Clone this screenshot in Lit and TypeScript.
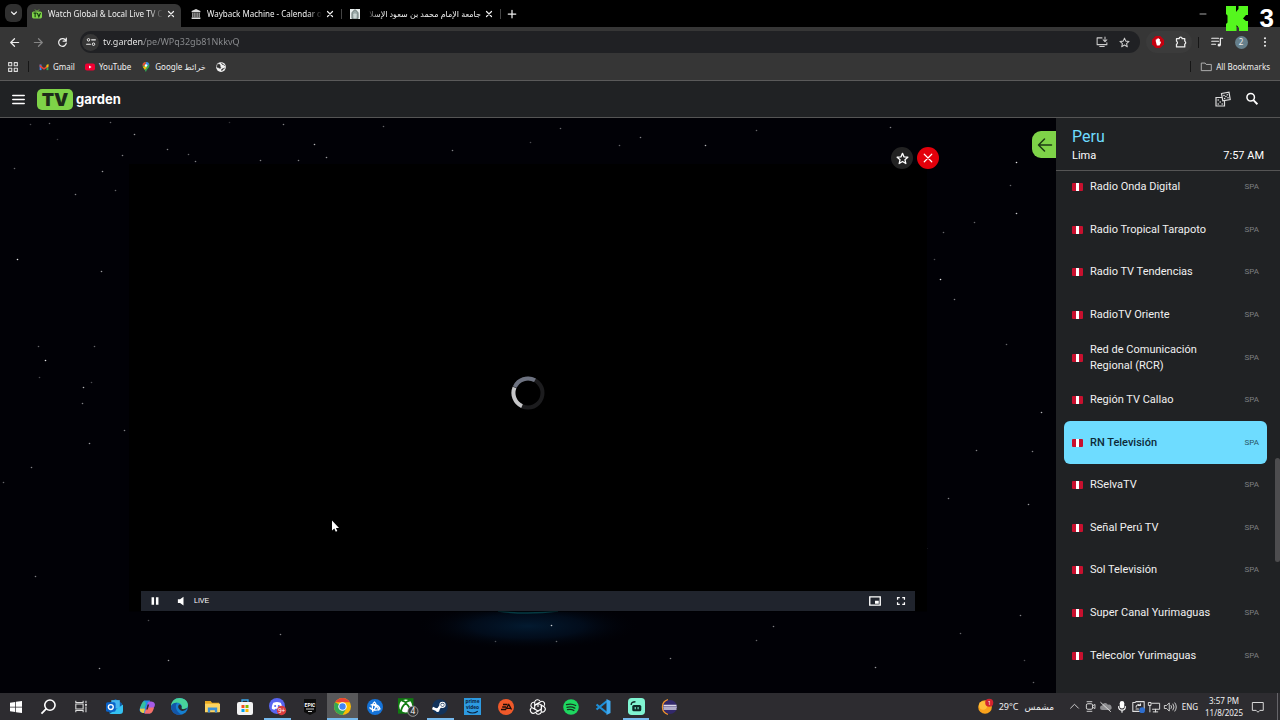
import { LitElement, html, svg, css } from "lit";
import { customElement } from "lit/decorators.js";
import { classMap } from "lit/directives/class-map.js";

const icon = (w: number, body: unknown, h = w, box = "0 0 16 16") =>
  html`<svg width=${w} height=${h} viewBox=${box} fill="none" aria-hidden="true">${body}</svg>`;

const line = (d: string, color = "#eee", width = 1.6) =>
  svg`<path d=${d} stroke=${color} stroke-width=${width} stroke-linecap="round" stroke-linejoin="round"/>`;

const STAR = "M8 1.6 9.9 6l4.7.4-3.6 3.1 1.1 4.7L8 11.7l-4.1 2.5L5 9.5 1.4 6.4 6.1 6z";
const close = icon(8, line("M3 3l10 10M13 3L3 13", "#eee", 2.4));

const tvFav = svg`<path d="M5 1l3 3 3-3" stroke="#7ed348" stroke-width="1.6"/><rect x="0" y="4" width="16" height="11" rx="2.5" fill="#7ed348"/><path d="M2.5 6.5h5M5 6.5V13M8.5 6.5l2.5 6 2.500-6" stroke="#173d10" stroke-width="1.8"/>`;
const archiveFav = svg`<path d="M8 0l7 3v2H1V3z" fill="#ddd"/><path d="M3 6v7M6.300 6v7M9.700 6v7M13 6v7" stroke="#ddd" stroke-width="1.700"/><path d="M1 13.500h14V16H1z" fill="#ddd"/>`;
const domeFav = svg`<path d="M0 0h16v16H0z" fill="#e8eeee"/><path d="M3 15V7c0-3 3-4 5-6 2 2 5 3 5 6v8z" fill="#9aa9a8" stroke="#44504f"/><path d="M5.500 15V8.500c0-2 5-2 5 0V15z" fill="#c9d4d3"/>`;

const tabs = [
  { title: "Watch Global & Local Live TV C", fav: tvFav, active: true, rtl: false },
  { title: "Wayback Machine - Calendar of", fav: archiveFav, active: false, rtl: false },
  { title: "جامعة الإمام محمد بن سعود الإسلا", fav: domeFav, active: false, rtl: true },
];

const gmail = svg`<path d="M1 13V4h3v9z" fill="#4285f4"/><path d="M12 13V4h3v9z" fill="#34a853"/><path d="M1 4l7 5.500L15 4v3.500l-7 5-7-5z" fill="#ea4335"/><path d="M12 5l3-2v4l-3 2z" fill="#fbbc04"/>`;
const youtube = svg`<rect x="0" y="2.500" width="16" height="11" rx="3" fill="#f00033"/><path d="M6.500 5.500v5l4-2.500z" fill="#fff"/>`;
const maps = svg`<path d="M8 0a5.500 5.500 0 0 0-5.500 5.500C2.500 9.500 7 11 8 16z" fill="#34a853"/><path d="M8 0a5.500 5.500 0 0 1 5.500 5.500C13.500 9.500 9 11 8 16L5 10z" fill="#34a853"/><path d="M3 8l5-2 1 3-3 3.500z" fill="#fbbc04"/><path d="M8 0a5.500 5.500 0 0 0-5.300 7l4-3z" fill="#ea4335"/><path d="M8 0a5.500 5.500 0 0 1 5 3L8 8z" fill="#4285f4"/><circle cx="8" cy="5.500" r="2" fill="#fff"/>`;
const globe = svg`<circle cx="8" cy="8" r="7.800" fill="#f1f1f1"/><path d="M3 3.500c3 0 4 1 3.500 2.500S8 8 7.500 9.500 4 9 1.500 8c0-2 .5-3.500 1.500-4.500zM9 1.500c0 2 1 2.500 2.500 2.500S13 6 14.500 6M9.500 14c-1.500-1-.5-2.500.5-3s3-.5 4-1.500" fill="#333" stroke="#333"/>`;

const channels = [
  "Radio Onda Digital",
  "Radio Tropical Tarapoto",
  "Radio TV Tendencias",
  "RadioTV Oriente",
  "Red de Comunicación Regional (RCR)",
  "Región TV Callao",
  "RN Televisión",
  "RSelvaTV",
  "Señal Perú TV",
  "Sol Televisión",
  "Super Canal Yurimaguas",
  "Telecolor Yurimaguas",
];

// x, y, opacity
const stars: number[][] = [
  [49, 5, 0.4], [110, 4, 0.4], [57, 21, 0.25], [134, 16, 0.6], [167, 31, 0.5], [122, 37, 0.5], [188, 36, 0.4], [195, 43, 0.5],
  [229, 4, 0.2], [283, 6, 0.5], [314, 26, 0.7], [326, 39, 0.6], [260, 42, 0.5], [298, 42, 0.5], [14, 50, 0.4], [102, 53, 0.6],
  [75, 76, 0.5], [115, 72, 0.4], [17, 141, 0.9], [101, 153, 0.6], [38, 228, 0.4], [45, 242, 0.9], [39, 259, 0.3], [94, 228, 0.4],
  [83, 269, 0.7], [91, 264, 0.3], [82, 285, 0.5], [30, 6, 0.3], [124, 312, 0.5], [89, 325, 0.6], [31, 349, 0.5], [3, 364, 0.4],
  [35, 458, 0.5], [148, 502, 0.3], [280, 516, 0.5], [99, 550, 0.6], [168, 542, 0.6], [551, 507, 0.8], [495, 523, 0.3], [556, 523, 0.4],
  [773, 508, 0.5], [756, 522, 0.4], [875, 549, 0.6], [960, 515, 0.4], [1020, 497, 0.5], [1024, 542, 0.3], [1033, 564, 0.4], [670, 540, 0.5],
  [890, 9, 0.5], [705, 27, 0.7], [1016, 44, 0.9], [1010, 67, 0.4], [1016, 95, 0.8], [974, 104, 0.4], [943, 114, 0.4], [934, 141, 0.3],
  [940, 161, 0.9], [954, 181, 0.5], [1041, 294, 0.7], [1032, 333, 0.5], [976, 332, 0.5], [948, 380, 0.5], [1028, 386, 0.6], [1006, 226, 0.4],
  [640, 19, 0.5], [560, 10, 0.4], [452, 32, 0.5], [756, 12, 0.4], [619, 27, 0.4], [530, 24, 0.3], [926, 430, 0.4], [383, 8, 0.4],
];

type App = { name: string; art: unknown; running?: boolean; active?: boolean; size?: number };
const apps: App[] = [
  { name: "Start", size: 12, art: svg`<path d="M0 2.300l7-1v6.200H0zM8 1.100L16 0v7.500H8zM0 8.500h7v6.200l-7-1zM8 8.500h8V16l-8-1.100z" fill="#fff"/>` },
  { name: "Search", art: svg`<circle cx="9.500" cy="6.500" r="5.500" stroke="#fff" stroke-width="1.700"/><path d="M5.700 10.300L.5 15.500" stroke="#fff" stroke-width="1.900"/>` },
  { name: "Task View", size: 13, art: svg`<path d="M1 1v2h9V1M1 15v-2h9v2M1 5h9v6H1zM13.500 1v3M13.500 8v7" stroke="#ddd" stroke-width="1.300"/><path d="M12.500 5h2v2h-2z" fill="#fff"/>` },
  { name: "Outlook", size: 17, art: svg`<path d="M3 5l6-4 6 4v9H3z" fill="#0f5ea8"/><path d="M5 2h8v8H5z" fill="#45b5ef"/><path d="M3 15h10a3 3 0 0 0 3-3V6l-7 5z" fill="#35c1f1"/><rect y="4" width="9" height="9" rx="1.500" fill="#0a63c9"/><circle cx="4.500" cy="8.500" r="2.300" stroke="#fff" stroke-width="1.300"/>` },
  { name: "Copilot", size: 16, art: svg`<path d="M5 1.500h6L8 12c-.5 1.500-1 2-2.500 2-3 0-6-1-4.500-5z" fill="#1f8fe8"/><path d="M1 9h4.500L7 4 5 2C3 3 2 6 1 9z" fill="#35c0a0"/><path d="M1 9.500h5L5 14c-2.500 0-4.500-1.500-4-4.500z" fill="#e9d045"/><path d="M11 14.500H5.500L8.500 4.500C9 3 9.500 2.500 11 2.500c3 0 6 1 4.500 5z" fill="#a65be6"/><path d="M11 14.500H5.500L8 8.500h7c-1 3.500-2 6-4 6z" fill="#f5706a"/><path d="M8.500 5.500L7.200 10.500h1.500L10.200 5.500z" fill="#2d2c30"/>` },
  { name: "Edge", size: 17, art: svg`<circle cx="8" cy="8" r="8" fill="#1680d0"/><path d="M0 8C0 3 4 0 8 0c5 0 8 3.500 8 6.500 0 3-2.500 4-4.500 4-1.500 0-2-.7-1.500-1.500C11 7 8.500 4.500 6 4.500 3 4.500.5 6 0 8z" fill="#48d39b"/><path d="M0 8c.5-2.500 3-3.800 6-3.500C4 6 4 10 6.500 13c1 1.500 3 2.500 4 2.500C5 17.500 0 13.500 0 8z" fill="#1456a8"/><path d="M10 9c-.5.800 0 1.500 1.500 1.500 1 0 2-.2 3.500-1-1 3-6 4-8 0-.6-1.500 0-3 1-3.500 1 0 2.500 1.500 2 3z" fill="#2b2b2d"/>` },
  { name: "File Explorer", art: svg`<path d="M0 2h6l1.500 2H15v10H0z" fill="#e8a820"/><path d="M0 5h16v9H0z" fill="#fcd462"/><path d="M3 9h10v5.500h-2.500V12h-5v2.500H3z" fill="#3c91d8"/>` },
  { name: "Microsoft Store", size: 16, art: svg`<path d="M5 4V1h6v3" stroke="#3aa7ea" stroke-width="1.300"/><rect y="3" width="16" height="13" rx="2" fill="#f3f3f3"/><path d="M4.500 6h3v3h-3z" fill="#f25022"/><path d="M8.500 6h3v3h-3z" fill="#7fba00"/><path d="M4.500 10h3v3h-3z" fill="#00a4ef"/><path d="M8.500 10h3v3h-3z" fill="#ffb900"/>` },
  { name: "Discord", size: 17, running: true, art: svg`<circle cx="7.500" cy="7.500" r="7.500" fill="#5865f2"/><path d="M4 4.500c2.500-1 4.500-1 7 0 1 2 1.500 3.500 1.300 5.500-1 .8-2 1-2.500 1L9 10H6l-.8 1c-.5 0-1.500-.2-2.500-1C2.500 8 3 6.500 4 4.500z" fill="#fff"/><circle cx="5.800" cy="7.500" r="1" fill="#5865f2"/><circle cx="9.200" cy="7.500" r="1" fill="#5865f2"/><circle cx="11.800" cy="11.800" r="4.400" fill="#d83c3e"/><text x="11.800" y="14" font-size="6" font-family="Noto Sans, sans-serif" fill="#fff" text-anchor="middle">9+</text>` },
  { name: "Epic Games", size: 16, art: svg`<path d="M2 0h12v13l-6 3-6-3z" fill="#0c0c0c"/><text x="8" y="7.500" font-size="5" font-weight="700" font-family="Roboto, sans-serif" fill="#fff" text-anchor="middle">EPIC</text><path d="M4 10h8M6 12.500h4" stroke="#ccc"/>` },
  { name: "Google Chrome", size: 17, running: true, active: true, art: svg`<circle cx="8" cy="8" r="8" fill="#fbbc04"/><path d="M1.100 4A8 8 0 0 0 8 16l3.500-6L8 8z" fill="#34a853"/><path d="M1.100 4a8 8 0 0 1 13.800 0H8z" fill="#ea4335"/><circle cx="8" cy="8" r="4" fill="#fff"/><circle cx="8" cy="8" r="3" fill="#4285f4"/>` },
  { name: "Battle.net", size: 16, art: svg`<circle cx="8" cy="8" r="8" fill="#1573d8"/><path d="M2.500 8.500c2 2.500 7 3.500 10.500 1.500-1-3-3.500-4.500-6.500-4.500M6 13c-1.500-4-.5-9 1.500-10 2 1.500 1.500 5-1 8.500M3.500 6c3-1 7.500 1.500 8.500 5.500" stroke="#fff" stroke-width="1.300"/>` },
  { name: "Xbox", size: 19, art: svg`<path d="M0 1h13v13H0z" fill="#107c10"/><circle cx="6.500" cy="7.500" r="5.500" fill="#fff"/><path d="M2.500 12C3 9 5 6.500 6.500 5.500 8 6.500 10 9 10.500 12M3 3c1.500 0 2.500.7 3.500 1.500C7.500 3.700 8.500 3 10 3" stroke="#107c10" stroke-width="1.500"/><circle cx="12.500" cy="12" r="4.300" fill="#333" stroke="#bbb" stroke-width=".6"/><text x="12.500" y="14.600" font-size="7" font-family="Noto Sans, sans-serif" fill="#fff" text-anchor="middle">4</text>` },
  { name: "Steam", size: 16, running: true, art: svg`<circle cx="8" cy="8" r="7.800" fill="#12325a"/><path d="M.5 9l5 2.200L8.500 7" stroke="#fff" stroke-width="2.500"/><circle cx="10.500" cy="5.800" r="2.600" stroke="#fff" stroke-width="1.100"/><circle cx="10.500" cy="5.800" r="1.400" fill="#fff"/><circle cx="5.600" cy="11" r="1.900" fill="#fff"/>` },
  { name: "Prime Video", size: 17, art: svg`<path d="M0 0h16v16H0z" fill="#2d9ae0"/><text font-size="4.500" font-weight="700" font-family="Noto Sans, sans-serif" fill="#0b2440" text-anchor="middle"><tspan x="8" y="5">prime</tspan><tspan x="8" y="10.500">video</tspan></text><path d="M3 12.500c3 2 7 2 10 0" stroke="#0b2440"/>` },
  { name: "EA", size: 16, art: svg`<circle cx="8" cy="8" r="8" fill="#f0592a"/><path d="M5 5.500h4.500M4.200 8H8M3 10.500h4.500L10.800 5.500l2.700 5M9 9.300h3.500" stroke="#1a0c08" stroke-width="1.300"/>` },
  { name: "ChatGPT", size: 16, art: svg`<g stroke="#fff" stroke-width="1.100"><path d="M8 8V4.200l3-1.700a2.800 2.800 0 0 1 3 4.500"/><path d="M5 6.300L8.300 4.400l3.200 1.900v4"/><path d="M8 4.200L4.700 6.200V2.800A3 3 0 0 1 10 2"/><path d="M4.700 6.200v3.900L1.800 8.500A3 3 0 0 1 4.500 3.400"/><path d="M4.700 10.100L8 12l-3 1.700A3 3 0 0 1 1.300 9"/><path d="M8 12l3.300-2v3.300A3 3 0 0 1 6 14"/><path d="M11.300 10V6.200l2.900 1.600a3 3 0 0 1-2.700 5.200"/></g>` },
  { name: "Spotify", size: 16, art: svg`<circle cx="8" cy="8" r="7.800" fill="#1ed760"/><path d="M3.500 5.700c3-1 6.500-.7 9.200.8M4 8.300c2.600-.8 5.500-.5 7.800.8M4.500 10.700c2.200-.6 4.500-.4 6.400.8" stroke="#17331f" stroke-width="1.300" stroke-linecap="round"/>` },
  { name: "Visual Studio Code", size: 16, art: svg`<path d="M1.500 5.500L12 14M1.500 10.500L12 2" stroke="#1d8fd8" stroke-width="2.200"/><path d="M11.500 0l4 2v12l-4 2z" fill="#3fa9f0"/>` },
  { name: "Streamlabs", size: 17, running: true, art: svg`<rect width="16" height="16" rx="3.500" fill="#80f5d2"/><rect x="4" y="6.500" width="8.500" height="6" rx="1.500" fill="#0d2b28"/><path d="M3 6.500C3 4.500 4.500 3.500 7 3.500" stroke="#0d2b28" stroke-width="1.300"/><path d="M6.800 8.500v2M9.500 8.500v2" stroke="#80f5d2"/>` },
  { name: "Eclipse", size: 16, art: svg`<path d="M7 .8a7.500 7.500 0 0 0 0 14.400" stroke="#f0932b" stroke-width="1.600"/><circle cx="9" cy="8" r="7" fill="#33296b"/><path d="M2.500 6.300h13M2.300 8.200h13.500M2.500 10h13" stroke="#dcd8ea" stroke-width="1.300"/>` },
];

@customElement("browser-chrome")
class BrowserChrome extends LitElement {
  static styles = css`
    :host { display: block; font: 8px/12px "Noto Sans", "DejaVu Sans", sans-serif; color: #f0f0f0; }
    button { all: unset; display: flex; align-items: center; justify-content: center; flex: none; }
    svg { display: block; flex: none; overflow: visible; }
    .strip { display: flex; height: 23px; padding: 4px 5px 0; background: #000; }
    .menu { width: 17px; height: 18px; border-radius: 6px; background: #303030; margin-right: 5px; }
    .tab { display: flex; align-items: center; width: 149px; padding: 0 0 4px 5px; margin-right: 5px; position: relative; }
    .tab.active { background: #363636; border-radius: 6px 6px 0 0; }
    .tab:not(.active)::after { content: ""; width: 1px; height: 10px; background: #444; position: absolute; right: -2px; top: 5px; }
    .title { flex: 1; margin: 0 2px 0 6px; overflow: hidden; white-space: nowrap; mask-image: linear-gradient(90deg, #000 88%, transparent); }
    .title.rtl { mask-image: linear-gradient(270deg, #000 88%, transparent); }
    .close { width: 12px; margin-right: 4px; }
    .add { width: 16px; padding-bottom: 4px; }
    .window { margin-left: auto; width: 144px; padding-bottom: 4px; }
    .bar { display: flex; align-items: center; height: 30px; background: #363636; padding: 0 3px 0 4px; }
    .nav { width: 20px; height: 20px; margin-right: 4px; }
    .omni { flex: 1; display: flex; align-items: center; height: 22px; border-radius: 11px; background: #202124; margin-left: 4px; padding: 0 7px 0 2px; gap: 4px; }
    .site { width: 17px; height: 17px; border-radius: 50%; background: #363636; }
    input { flex: 1; min-width: 0; border: 0; padding: 0; outline: 0; font: 9px/14px "Noto Sans", sans-serif; color: transparent;
      background: linear-gradient(90deg, #f2f2f2 41px, #8d8f92 41px) text; }
    .omni button:not(.site) { width: 18px; }
    .ext { display: flex; align-items: center; justify-content: space-around; width: 46px; height: 22px; border-radius: 11px; background: #3b3b3b; margin: 0 6px; }
    .rule { width: 1px; height: 11px; background: #161616; flex: none; }
    .tools { display: flex; align-items: center; margin-left: 6px; }
    .tools button { width: 24px; }
    .avatar span { width: 13px; height: 13px; border-radius: 50%; background: #66808c; text-align: center; }
    .marks { display: flex; align-items: center; height: 24px; padding: 0 10px 4px 8px; box-sizing: border-box; background: #363636; border-bottom: 1px solid #5a5a5a; }
    .marks a { display: flex; align-items: center; gap: 4px; color: inherit; text-decoration: none; margin-left: 10px; }
    .marks .rule { margin-left: 10px; }
    .marks .push { margin-left: auto; }
  `;

  render() {
    return html`
      <div class="strip">
        <button class="menu" aria-label="Search tabs">${icon(8, line("M3 6l5 5 5-5", "#eee", 2.2))}</button>
        ${tabs.map((t) => html`<div class=${classMap({ tab: true, active: t.active })}>
          ${icon(10, t.fav)}
          <span class=${classMap({ title: true, rtl: t.rtl })} dir=${t.rtl ? "rtl" : "ltr"}>${t.title}</span>
          <button class="close" aria-label="Close tab">${close}</button>
        </div>`)}
        <button class="add" aria-label="New tab">${icon(10, line("M8 2v12M2 8h12", "#eee", 2))}</button>
        <button class="window" aria-label="Minimize">${icon(8, line("M2 8h12", "#ddd", 1.500))}</button>
      </div>
      <div class="bar">
        <button class="nav" aria-label="Back">${icon(11, line("M14 8H3M8 2.500L2.500 8 8 13.500", "#eee", 1.800))}</button>
        <button class="nav" aria-label="Forward">${icon(11, line("M2 8h11M8 2.500L13.500 8 8 13.500", "#858585", 1.800))}</button>
        <button class="nav" aria-label="Reload">${icon(11, line("M13.500 9A5.600 5.600 0 1 1 12 4l1.500 1.500M13.500 1.500V6H9", "#eee", 1.800))}</button>
        <div class="omni">
          <button class="site" aria-label="Site information">${icon(10, svg`<circle cx="4" cy="4.500" r="2" stroke="#eee" stroke-width="1.600"/><circle cx="12" cy="11.500" r="2" stroke="#eee" stroke-width="1.600"/>${line("M9 4.500h6M1 11.500h6", "#eee", 1.800)}`)}</button>
          <input aria-label="Address" .value=${"tv.garden/pe/WPq32gb81NkkvQ"} />
          <button aria-label="Install app">${icon(12, line("M8 2.500H1.500v9h13V9M5 14h6M12 1.500v5.500M9.500 5l2.500 2.500L14.500 5", "#ccc", 1.400))}</button>
          <button aria-label="Bookmark">${icon(11, line(STAR, "#ccc", 1.500))}</button>
        </div>
        <div class="ext">
          <button aria-label="Ad blocker">${icon(12, svg`<path d="M5 0h6l5 5v6l-5 5H5l-5-5V5z" fill="#c4000f"/><path d="M5 7V4.500h1.300V3.500h1.400V3h1.400v1h1.400v4l1.300-1v2L10 12.500H6.500z" fill="#fff"/>`)}</button>
          <button aria-label="Extensions">${icon(12, line("M2 3.500h3.500a2 2 0 0 1 4 0H13v3.500a2 2 0 0 1 0 3.700V14.500H2v-3.500a2.200 2.200 0 0 0 0-4z", "#eee", 1.700))}</button>
        </div>
        <span class="rule"></span>
        <div class="tools">
          <button aria-label="Media">${icon(12, svg`${line("M1 3h9M1 7h9M1 11h5M12.500 12V3h3", "#eee", 1.600)}<circle cx="10.800" cy="12" r="2" fill="#eee"/>`)}</button>
          <button class="avatar" aria-label="Profile"><span>2</span></button>
          <button aria-label="Menu">${icon(12, svg`<circle cx="8" cy="3" r="1.400" fill="#eee"/><circle cx="8" cy="8" r="1.400" fill="#eee"/><circle cx="8" cy="13" r="1.400" fill="#eee"/>`)}</button>
        </div>
      </div>
      <nav class="marks">
        <button aria-label="Apps">${icon(10, line("M1 1h5v5H1zM10 1h5v5h-5zM1 10h5v5H1zM10 10h5v5h-5z", "#ddd", 1.700))}</button>
        <span class="rule"></span>
        <a href="#gmail">${icon(10, gmail)}Gmail</a>
        <a href="#youtube">${icon(10, youtube)}YouTube</a>
        <a href="#maps">${icon(10, maps)}<span dir="rtl">خرائط Google</span></a>
        <a href="#site" aria-label="Site">${icon(10, globe)}</a>
        <span class="rule push"></span>
        <a href="#all">${icon(11, line("M1 3h5l1.500 2H15v9H1z", "#bbb", 1.300))}All Bookmarks</a>
      </nav>`;
  }
}

@customElement("tv-garden")
class TvGarden extends LitElement {
  static styles = css`
    :host { display: flex; flex-direction: column; min-height: 0; font: 11px/16px Roboto, sans-serif; color: #f1f1f1; background: #202224; }
    button { all: unset; display: flex; align-items: center; justify-content: center; flex: none; box-sizing: border-box; }
    svg { display: block; flex: none; }
    header { display: flex; align-items: center; height: 36px; padding: 0 21px 0 12px; border-bottom: 1px solid #555; }
    .logo { display: flex; align-items: center; gap: 3px; margin: 0 auto 0 12px; color: #fff; text-decoration: none; font: 700 13px/16px Inter, sans-serif; }
    .logo b { display: block; width: 36px; text-align: center; border-radius: 5px; background: #7ed348; color: #1d2b1a; font-size: 18px; line-height: 21px; }
    header .dice { margin-right: 14px; }
    .body { flex: 1; display: flex; min-height: 0; }
    .stage { flex: 1; position: relative; overflow: hidden; background: #010106; padding: 58px 141px 0; box-sizing: border-box; min-width: 0; }
    .sky { position: absolute; inset: 0; width: 100%; height: 100%; }
    .player { position: relative; aspect-ratio: 16 / 9; background: #000; box-shadow: 0 0 0 12px #000; display: flex; flex-direction: column; clip-path: inset(-40px -40px 0); }
    .video { flex: 1; display: flex; align-items: center; justify-content: center; padding-top: 19px; }
    .controls { display: flex; align-items: center; height: 20px; padding: 0 6px 0 5px; background: #20242d; font: 7px/10px "Liberation Sans", sans-serif; color: #fff; }
    .controls button { width: 17px; margin-right: 9px; }
    .controls .fs { margin-right: 0; }
    .live { margin: 0 auto 0 -4px; }
    .actions { position: absolute; right: -24px; top: -29px; display: flex; gap: 4px; }
    .actions button { width: 22px; height: 22px; border-radius: 50%; background: #222; }
    .actions .shut { background: #e3000b; }
    .collapse { position: absolute; right: 0; top: 13px; width: 24px; height: 27px; border-radius: 9px 0 0 9px; background: #7ed348; padding-left: 2px; }
    aside { position: relative; display: flex; flex-direction: column; width: 224px; background: #202224; overflow: hidden; }
    .place { padding: 9px 16px 7px; height: 36px; border-bottom: 1px solid #555; z-index: 1; background: #202224; }
    h1 { margin: 0; font: 400 16px/20px Roboto, sans-serif; color: #6edcff; }
    .city { display: flex; justify-content: space-between; font-size: 11px; line-height: 17px; color: #fff; }
    ul { flex: 1; display: flex; flex-direction: column; list-style: none; margin: -5px 0 0; padding: 0 13px 16px 8px; }
    li { flex: 1; display: flex; }
    li a { flex: 1; display: flex; align-items: center; padding: 0 8px; border-radius: 6px; color: inherit; text-decoration: none; }
    li a.on { background: #6edcff; color: #0d2a38; font-weight: 500; }
    .name { flex: 1; padding: 0 24px 0 7px; }
    .lang { font-size: 8px; font-weight: 400; color: #7c7e80; }
    .on .lang { color: #2a5566; }
    .thumb { position: absolute; right: 0; top: 340px; width: 5px; height: 104px; border-radius: 3px; background: #4d4d4f; }
  `;

  render() {
    return html`
      <header>
        <button aria-label="Menu">${icon(13, line("M1 3h14M1 8h14M1 13h14", "#fff", 1.900))}</button>
        <a class="logo" href="#home"><b>TV</b>garden</a>
        <button class="dice" aria-label="Random channel">${icon(16, svg`<path d="M1 6.500h8.500V15H1z" stroke="#ddd" stroke-width="1.200"/><path d="M6.500 2.500l7.500-1.300 1.200 7.300-7.400 1.300z" fill="#202224" stroke="#ddd" stroke-width="1.200"/><g fill="#ddd"><circle cx="9" cy="4.500" r=".8"/><circle cx="12.300" cy="3.800" r=".8"/><circle cx="10.900" cy="5.500" r=".8"/><circle cx="9.600" cy="7.500" r=".8"/><circle cx="13" cy="6.800" r=".8"/><circle cx="3.200" cy="9" r=".8"/><circle cx="5.200" cy="11" r=".8"/><circle cx="3.200" cy="13" r=".8"/><circle cx="7.200" cy="13" r=".8"/></g>`)}</button>
        <button aria-label="Search">${icon(14, svg`<circle cx="6.500" cy="6" r="4.300" stroke="#fff" stroke-width="1.700"/><path d="M9.600 9.200L14.200 14" stroke="#fff" stroke-width="2.100"/>`)}</button>
      </header>
      <div class="body">
        <main class="stage">
          <svg class="sky" aria-hidden="true">
            <defs>
              <radialGradient id="glow"><stop offset="0" stop-color="#031a30"/><stop offset=".5" stop-color="#020f20" stop-opacity=".8"/><stop offset="1" stop-color="#010106" stop-opacity="0"/></radialGradient>
            </defs>
            <ellipse cx="528" cy="508" rx="112" ry="24" fill="url(#glow)"/>
            <path d="M498 493q29 4 60 0" stroke="#053a42" stroke-width="1.500" fill="none"/>
            ${stars.map(([x, y, o]) => svg`<circle cx=${x + 0.5} cy=${y + 0.5} r=".8" fill="#fff" opacity=${o}/>`)}
          </svg>
          <section class="player" aria-label="Player">
            <div class="video">
              ${icon(34, svg`<circle cx="17" cy="17" r="14.500" stroke="#1c1c1e" stroke-width="4"/><path d="M3.800 11A14.500 14.500 0 0 1 24 4.300" stroke="#6d7280" stroke-width="4"/><path d="M3.500 11.500A14.500 14.500 0 0 0 11 30.200" stroke="#c6c6c8" stroke-width="4"/>`, 34, "0 0 34 34")}
            </div>
            <div class="controls">
              <button aria-label="Pause">${icon(10, svg`<path d="M2.500 2h4v12h-4zM9.500 2h4v12h-4z" fill="#fff"/>`)}</button>
              <button aria-label="Mute">${icon(10, svg`<path d="M3 5h3.500L12 1v14L6.500 11H3z" fill="#fff"/>`)}</button>
              <span class="live">LIVE</span>
              <button aria-label="Picture in picture">${icon(12, svg`<path d="M1 2.500h14v11H1z" stroke="#fff" stroke-width="1.800"/><path d="M8 7.500h5v4H8z" fill="#fff"/>`)}</button>
              <button class="fs" aria-label="Fullscreen">${icon(10, svg`<path d="M2.500 6V2.500H6M10 2.500h3.500V6M13.500 10v3.500H10M6 13.500H2.500V10" stroke="#fff" stroke-width="2"/>`)}</button>
            </div>
            <div class="actions">
              <button aria-label="Favorite">${icon(13, line(STAR, "#fff", 1.600))}</button>
              <button class="shut" aria-label="Close player">${icon(12, line("M3 3l10 10M13 3L3 13", "#fff", 1.600))}</button>
            </div>
          </section>
          <button class="collapse" aria-label="Collapse list">${icon(16, line("M14.500 8H2M7.500 2L1.500 8l6 6", "#1d3a14", 1.500))}</button>
        </main>
        <aside>
          <div class="place">
            <h1>Peru</h1>
            <div class="city"><span>Lima</span><time>7:57 AM</time></div>
          </div>
          <ul>
            ${channels.map((c) => html`<li><a href="#channel" class=${classMap({ on: c === "RN Televisión" })}>
              ${icon(11, svg`<rect width="11" height="8" rx="1" fill="#c8102e"/><path d="M4 0h3v8H4z" fill="#fff"/>`, 8, "0 0 11 8")}
              <span class="name">${c}</span><span class="lang">SPA</span>
            </a></li>`)}
          </ul>
          <div class="thumb"></div>
        </aside>
      </div>`;
  }
}

@customElement("task-bar")
class TaskBar extends LitElement {
  static styles = css`
    :host { display: flex; height: 27px; background: #2d2c30; color: #f0f0f0; font: 9px/12px "Noto Sans", "DejaVu Sans", sans-serif; }
    button { all: unset; display: flex; align-items: center; justify-content: center; flex: none; }
    svg { display: block; flex: none; overflow: visible; }
    .apps { display: grid; grid-template-columns: repeat(21, 1fr); width: 685px; }
    .apps button { box-sizing: border-box; border-bottom: 2px solid transparent; border-top: 2px solid transparent; margin: 0 3px; }
    .apps .run { border-bottom-color: #76b9ed; }
    .apps .active { background: #58585a; border-top-color: #58585a; margin: 0 1px; }
    .tray { display: flex; align-items: center; margin-left: auto; }
    .weather { gap: 6px; margin-right: 12px; }
    .tray .small { width: 16px; }
    .lang { font-size: 8px; width: 24px; text-align: center; }
    .clock { width: 46px; margin-left: -1px; text-align: center; font-size: 8px; line-height: 12px; }
    .note { width: 22px; }
    .peek { width: 1px; align-self: stretch; background: #66656a; margin: 0 2px 0 8px; }
  `;

  render() {
    const g = "#ddd";
    return html`
      <div class="apps">
        ${apps.map((a) => html`<button class=${classMap({ run: !!a.running, active: !!a.active })} aria-label=${a.name}>${icon(a.size ?? 15, a.art)}</button>`)}
      </div>
      <div class="tray">
        <button class="weather">
          ${icon(15, svg`<circle cx="7.500" cy="8.500" r="7.300" fill="#f9a21b"/><circle cx="5.500" cy="7" r="4.500" fill="#ffbf3a"/><circle cx="12" cy="4" r="4.300" fill="#d1242f"/><text x="12" y="6.300" font-size="6" font-family="Noto Sans, sans-serif" text-anchor="middle" fill="#fff">1</text>`)}
          <span>29°C</span><span dir="rtl">مشمس</span>
        </button>
        <button class="small" aria-label="Show hidden icons">${icon(9, line("M1 11l7-7 7 7", g, 1.600))}</button>
        <button class="small" aria-label="Meet now">${icon(11, svg`<rect x="2" y="4" width="9" height="8" rx="2" stroke=${g} stroke-width="1.400"/>${line("M11 7l3.500-2v6L11 9M3 1h7M3 15h7", g, 1.300)}`)}</button>
        <button class="small" aria-label="OneDrive">${icon(12, svg`<path d="M3 12a3 3 0 0 1 0-6 4 4 0 0 1 7.500-1A3.500 3.500 0 0 1 13 12z" fill="#8d8d90"/>${line("M1 2l13 12", g, 1.300)}`)}</button>
        <button class="small" aria-label="Microphone">${icon(12, svg`<rect x="5" y="0" width="6" height="10" rx="3" fill="#fff"/>${line("M3.500 7.500a4.500 4.500 0 0 0 9 0M8 12v3", "#fff", 1.500)}`)}</button>
        <button class="small" aria-label="Sync">${icon(13, svg`${line("M1 3h3l1-1h10v9M1 3v11h8M5 9a3 3 0 0 1 5-2.500M10.500 4.500v2.300H8M5 11h3", g, 1.300)}<circle cx="12.500" cy="12.500" r="3.500" fill="#2f6fd0"/>`)}</button>
        <button class="small" aria-label="Network">${icon(12, line("M5 3h10.500v8H6M10 11v3.500M7 14.500h6M1 2h3v4H1zM2.500 6v8.500", g, 1.300))}</button>
        <button class="small" aria-label="Volume">${icon(12, line("M1 6h2.500L7 2.500v11L3.500 10H1zM9.500 6q1.500 2 0 4M12 4q3 4 0 8M14.500 2.500q4 5.500 0 11", g, 1.200))}</button>
        <button class="lang">ENG</button>
        <button class="clock"><span>3:57 PM<br />11/8/2025</span></button>
        <button class="note" aria-label="Notifications">${icon(12, line("M1 2h14v10.500h-4.500L8 15l-2.500-2.500H1z", g, 1.300))}</button>
        <span class="peek"></span>
      </div>`;
  }
}

@customElement("app-root")
class AppRoot extends LitElement {
  static styles = css`
    :host { display: flex; flex-direction: column; height: 100vh; position: relative; overflow: hidden; background: #000; }
    tv-garden { flex: 1; }
    .overlay { position: absolute; top: 4px; right: 6px; display: flex; align-items: center; gap: 12px; color: #fff; font: 700 26px/28px "Liberation Sans", sans-serif; }
    .cursor { position: absolute; left: 331px; top: 520px; }
    svg { display: block; }
  `;

  render() {
    return html`
      <browser-chrome></browser-chrome>
      <tv-garden></tv-garden>
      <task-bar></task-bar>
      <div class="overlay">
        ${icon(22, svg`<path d="M0 0h10v6l2.500-3V0H22v9h-2l-3 3.500 3 2.500h2v10h-9v-3l-2.500-3v6H0v-7l1.500-1.500v-7L0 8z" fill="#55f71e"/>`, 25, "0 0 22 25")}
        <span>3</span>
      </div>
      <svg class="cursor" width="8" height="12" viewBox="0 0 8 12" aria-hidden="true"><path d="M1 .5v10l2.300-2 1.500 3.200 1.500-.7-1.400-3.100H8z" fill="#fff"/></svg>`;
  }
}
